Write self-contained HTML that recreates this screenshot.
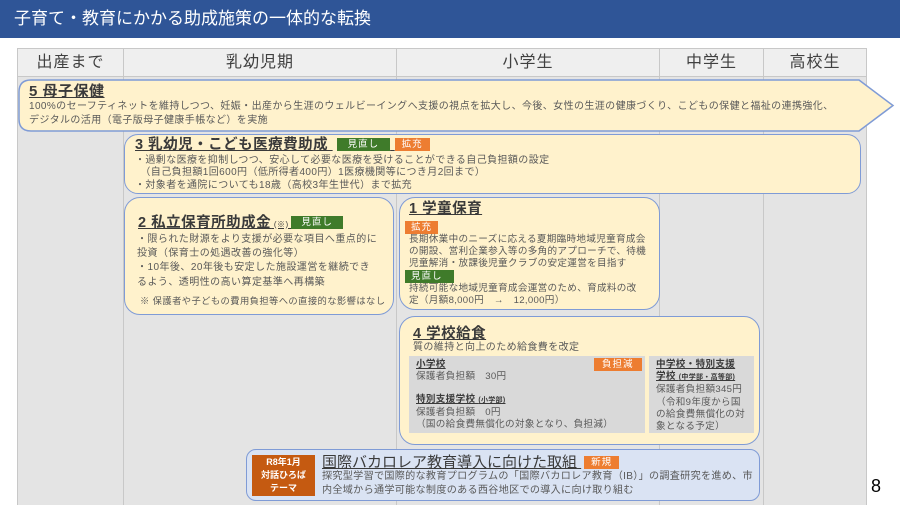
<!DOCTYPE html>
<html><head><meta charset="utf-8"><style>
*{margin:0;padding:0;box-sizing:border-box}
body{width:900px;height:518px;background:#fff;position:relative;overflow:hidden;font-family:"Liberation Sans","Noto Sans CJK JP",sans-serif;color:#595959}
.a{position:absolute}
.hdr{left:0;top:0;width:900px;height:38px;background:#2f5597;color:#fff;font-size:17px;line-height:38px;padding-left:14px}
.th{top:48px;height:29px;background:#efefef;border:1px solid #c8c8c8;font-size:16px;color:#404040;text-align:center;line-height:27px;letter-spacing:1px}
.col{top:77px;height:428px;background:#e4e4e4;border-left:1px solid #c8c8c8}
.box{background:#fff2cc;border:1.5px solid #7f9bd6;border-radius:14px}
.t{font-size:14.5px;line-height:16px;font-weight:bold;color:#3a3a3a;text-decoration:underline;white-space:nowrap;letter-spacing:0.5px}
.s{font-size:10px;line-height:12px;white-space:nowrap;letter-spacing:0.4px}
.tag{display:inline-block;color:#fff;font-size:9.5px;line-height:13px;padding:0 9px;letter-spacing:1px;vertical-align:top;margin-top:1px}
.g{background:#3f7b2a}.o{background:#ed7d31}
</style></head><body>
<div class="a hdr">子育て・教育にかかる助成施策の一体的な転換</div>
<div class="a th" style="left:17px;width:107px">出産まで</div>
<div class="a th" style="left:123px;width:274px">乳幼児期</div>
<div class="a th" style="left:396px;width:264px">小学生</div>
<div class="a th" style="left:659px;width:105px">中学生</div>
<div class="a th" style="left:763px;width:104px">高校生</div>
<div class="a col" style="left:17px;width:107px"></div>
<div class="a col" style="left:123px;width:274px"></div>
<div class="a col" style="left:396px;width:264px"></div>
<div class="a col" style="left:659px;width:105px"></div>
<div class="a col" style="left:763px;width:104px;border-right:1px solid #c8c8c8"></div>

<svg class="a" style="left:0;top:0" width="900" height="518">
<path d="M31 80 H859 L893 105.5 L859 131 H31 Q19 131 19 119 V92 Q19 80 31 80 Z" fill="#fff2cc" stroke="#7f9bd6" stroke-width="1.5"/>
</svg>
<div class="a t" style="left:29px;top:84px;font-size:15px">5 母子保健</div>
<div class="a s" style="left:29px;top:100px;line-height:13.5px">100%のセーフティネットを維持しつつ、妊娠・出産から生涯のウェルビーイングへ支援の視点を拡大し、今後、女性の生涯の健康づくり、こどもの保健と福祉の連携強化、<br>デジタルの活用（電子版母子健康手帳など）を実施</div>

<div class="a box" style="left:124px;top:134px;width:737px;height:60px"></div>
<div class="a t" style="left:135px;top:137px">3 乳幼児・こども医療費助成 <span class="tag g" style="text-decoration:none;font-weight:normal;margin-left:4px;padding:0 11px">見直し</span> <span class="tag o" style="text-decoration:none;font-weight:normal;padding:0 7px">拡充</span></div>
<div class="a s" style="left:135px;top:155px;line-height:12.3px">・過剰な医療を抑制しつつ、安心して必要な医療を受けることができる自己負担額の設定<br>　（自己負担額1回600円（低所得者400円）1医療機関等につき月2回まで）<br>・対象者を通院についても18歳（高校3年生世代）まで拡充</div>

<div class="a box" style="left:124px;top:197px;width:270px;height:118px;border-radius:16px"></div>
<div class="a t" style="left:138px;top:215px">2 私立保育所助成金<span style="font-size:8px;font-weight:normal;text-decoration:none"> (※) </span><span class="tag g" style="text-decoration:none;font-weight:normal;padding:0 10px">見直し</span></div>
<div class="a s" style="left:137px;top:233px;line-height:14.2px;letter-spacing:0.45px">・限られた財源をより支援が必要な項目へ重点的に<br>投資（保育士の処遇改善の強化等）<br>・10年後、20年後も安定した施設運営を継続でき<br>るよう、透明性の高い算定基準へ再構築</div>
<div class="a s" style="left:140px;top:295px;font-size:9.3px">※ 保護者や子どもの費用負担等への直接的な影響はなし</div>

<div class="a box" style="left:399px;top:197px;width:261px;height:113px;border-radius:16px"></div>
<div class="a t" style="left:409px;top:201px">1 学童保育</div>
<div class="a tag o" style="left:405px;top:220px;padding:0 6px">拡充</div>
<div class="a s" style="left:409px;top:234px;font-size:9.6px;letter-spacing:0.3px;line-height:12px">長期休業中のニーズに応える夏期臨時地域児童育成会<br>の開設、営利企業参入等の多角的アプローチで、待機<br>児童解消・放課後児童クラブの安定運営を目指す</div>
<div class="a tag g" style="left:405px;top:269px;padding:0 6px;width:49px">見直し</div>
<div class="a s" style="left:409px;top:283px;font-size:9.6px;letter-spacing:0.3px;line-height:12px">持続可能な地域児童育成会運営のため、育成料の改<br>定（月額8,000円　→　12,000円）</div>

<div class="a box" style="left:399px;top:316px;width:361px;height:129px;border-radius:16px"></div>
<div class="a t" style="left:413px;top:326px">4 学校給食</div>
<div class="a s" style="left:413px;top:342px">質の維持と向上のため給食費を改定</div>
<div class="a" style="left:409px;top:356px;width:236px;height:77px;background:#d9d9d9"></div>
<div class="a" style="left:649px;top:356px;width:105px;height:77px;background:#d9d9d9"></div>
<div class="a tag o" style="left:594px;top:357px;padding:0 8px">負担減</div>
<div class="a s" style="left:416px;top:359px;font-size:9.6px;letter-spacing:0.3px;line-height:11.8px"><b style="text-decoration:underline;color:#3a3a3a">小学校</b><br>保護者負担額　30円<br><br><b style="text-decoration:underline;color:#3a3a3a">特別支援学校 <span style="font-size:7px">(小学部)</span></b><br>保護者負担額　0円<br>（国の給食費無償化の対象となり、負担減）</div>
<div class="a s" style="left:656px;top:359px;font-size:9.6px;letter-spacing:0.3px;line-height:12.2px"><b style="text-decoration:underline;color:#3a3a3a">中学校・特別支援<br>学校 <span style="font-size:7px">(中学部・高等部)</span></b><br>保護者負担額345円<br>（令和9年度から国<br>の給食費無償化の対<br>象となる予定）</div>

<div class="a" style="left:246px;top:449px;width:514px;height:52px;background:#dae3f3;border:1.5px solid #7f9bd6;border-radius:10px"></div>
<div class="a" style="left:252px;top:455px;width:63px;height:41px;background:#c55a11;color:#fff;font-size:9px;font-weight:bold;text-align:center;line-height:13px;padding-top:1px">R8年1月<br>対話ひろば<br>テーマ</div>
<div class="a t" style="left:322px;top:455px;font-size:15px;font-weight:normal;letter-spacing:0">国際バカロレア教育導入に向けた取組 <span class="tag o" style="text-decoration:none;padding:0 7px;margin-left:3px">新規</span></div>
<div class="a s" style="left:322px;top:470px;font-size:10.1px;letter-spacing:0.3px;line-height:14px">探究型学習で国際的な教育プログラムの「国際バカロレア教育（IB）」の調査研究を進め、市<br>内全域から通学可能な制度のある西谷地区での導入に向け取り組む</div>
<div class="a" style="left:871px;top:476px;font-size:18px;color:#000">8</div>
</body></html>
